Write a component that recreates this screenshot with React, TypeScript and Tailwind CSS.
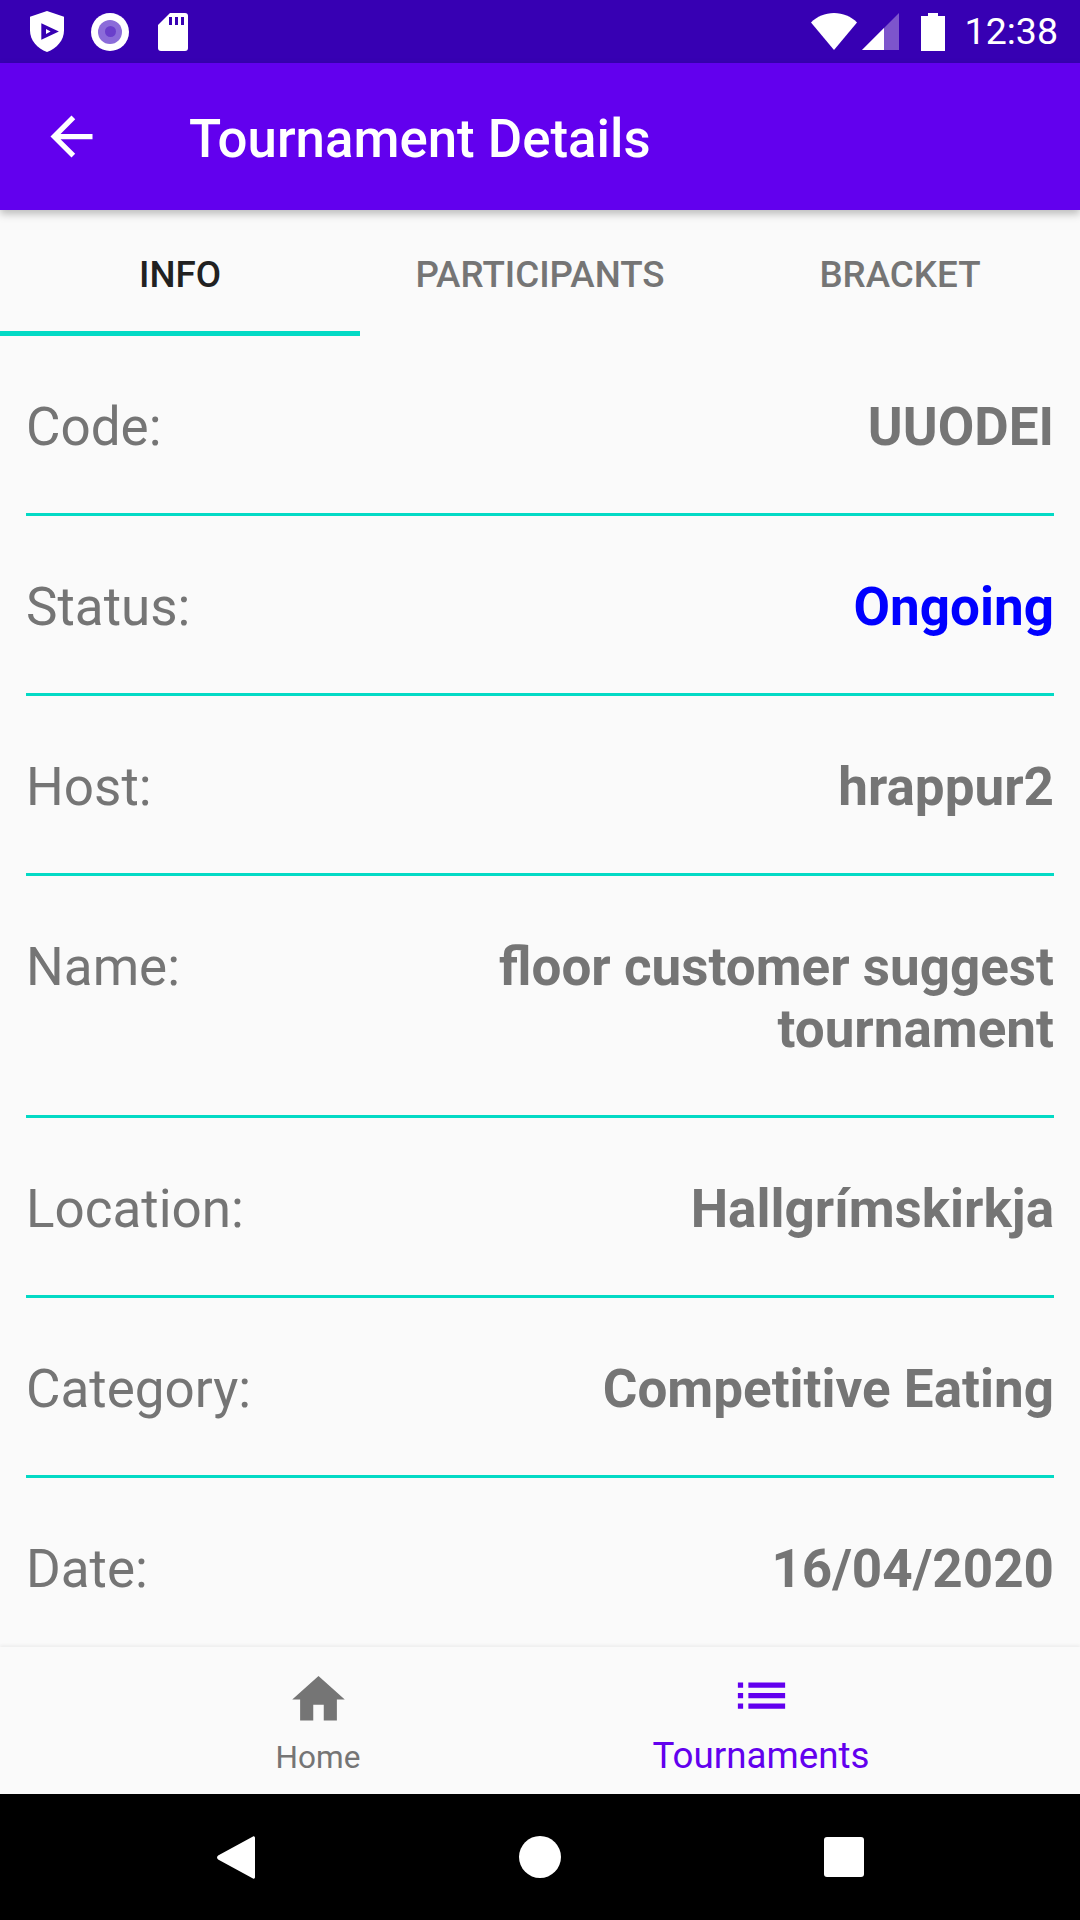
import React from 'react';

const rows = [
  { label: 'Code:', value: 'UUODEI' },
  { label: 'Status:', value: 'Ongoing', valueClass: 'text-[#0000ff]' },
  { label: 'Host:', value: 'hrappur2' },
  { label: 'Name:', value: 'floor customer suggest tournament' },
  { label: 'Location:', value: 'Hallgrímskirkja' },
  { label: 'Category:', value: 'Competitive Eating' },
  { label: 'Date:', value: '16/04/2020' },
];

function StatusBar() {
  return (
    <div className="flex h-[63px] shrink-0 items-center bg-[#3700b3] pl-[30px] pr-[22px] text-white">
      {/* shield */}
      <svg width="34" height="41" viewBox="0 0 33 42" preserveAspectRatio="none">
        <path d="M16.500 0L33 6v14c0 10-7 18.500-16.500 22C7 38.500 0 30 0 20V6z" fill="#fff" />
        <path d="M11 12.500L28 21l-17 8.500z" fill="#3700b3" />
        <path d="M15.500 18.500L20 21l-4.500 2.500z" fill="#fff" />
      </svg>
      {/* record */}
      <div className="ml-[27px] flex h-[38px] w-[38px] items-center justify-center rounded-full bg-white">
        <div className="flex h-[24px] w-[24px] items-center justify-center rounded-full bg-[#8b6cd9]">
          <div className="h-[11px] w-[11px] rounded-full bg-[#6a3fcb]" />
        </div>
      </div>
      {/* sd card */}
      <svg width="30" height="38" viewBox="0 0 30 38" className="ml-[29px]">
        <path d="M12 0h15a3 3 0 0 1 3 3v32a3 3 0 0 1-3 3H3a3 3 0 0 1-3-3V12z" fill="#fff" />
        <path d="M11 4h3v8h-3zM17 4h3v8h-3zM23 4h3v8h-3z" fill="#3700b3" />
      </svg>
      <div className="flex-1" />
      {/* wifi */}
      <svg width="46" height="37" viewBox="0 0 46 37">
        <path d="M23 37L0 9.500C6 3.500 14 0 23 0s17 3.500 23 9.500z" fill="#fff" />
      </svg>
      {/* signal */}
      <svg width="37" height="37" viewBox="0 0 37 37" className="ml-[5px]">
        <path d="M0 37L37 0v37z" fill="#7d55cc" />
        <path d="M0 37l22-22v22z" fill="#fff" />
      </svg>
      {/* battery */}
      <svg width="24" height="38" viewBox="0 0 24 38" className="ml-[22px]">
        <path d="M7 0h10v3h7v35H0V3h7z" fill="#fff" />
      </svg>
      <span className="ml-[20px] font-['Roboto',sans-serif] text-[37.5px] leading-none">12:38</span>
    </div>
  );
}

function AppBar() {
  return (
    <div className="relative z-10 flex h-[147px] shrink-0 items-center bg-[#6200ee] pl-[40px] shadow-[0_4px_8px_rgba(0,0,0,0.25)]">
      <svg width="63" height="63" viewBox="0 0 24 24" fill="#fff">
        <path d="M20 11H7.830l5.590-5.590L12 4l-8 8 8 8 1.410-1.410L7.830 13H20v-2z" />
      </svg>
      <h1 className="ml-[86px] pt-[5px] font-['Roboto',sans-serif] text-[52.8px] font-medium leading-none text-white">
        Tournament Details
      </h1>
    </div>
  );
}

function Tabs() {
  const tabs = ['INFO', 'PARTICIPANTS', 'BRACKET'];
  return (
    <div className="grid h-[126px] shrink-0 grid-cols-3">
      {tabs.map((tab, i) => (
        <div
          key={tab}
          className={`flex items-center justify-center border-b-[5px] pt-[9px] text-[36.75px] font-medium ${
            i === 0 ? 'border-[#03dac5] text-[#212121]' : 'border-transparent text-[#757575]'
          }`}
        >
          {tab}
        </div>
      ))}
    </div>
  );
}

function BottomNav() {
  return (
    <div className="relative z-10 flex h-[147px] shrink-0 justify-center bg-[#fafafa] shadow-[0_-2px_3px_rgba(0,0,0,0.05)]">
      <div className="flex w-[442px] -translate-x-[1px] flex-col items-center text-[#757575]">
        <svg width="63" height="63" viewBox="0 0 24 24" fill="currentColor" className="mt-[21px]">
          <path d="M10 20v-6h4v6h5v-8h3L12 3 2 12h3v8z" />
        </svg>
        <span className="mt-[8px] text-[31.5px] leading-[37px]">Home</span>
      </div>
      <div className="flex w-[442px] flex-col items-center text-[#6200ee]">
        <svg width="63" height="63" viewBox="0 0 24 24" fill="currentColor" className="mt-[17px]">
          <path d="M3 13h2v-2H3v2zm0 4h2v-2H3v2zm0-8h2V7H3v2zm4 4h14v-2H7v2zm0 4h14v-2H7v2zM7 7v2h14V7H7z" />
        </svg>
        <span className="mt-[7px] text-[36.75px] leading-[43px]">Tournaments</span>
      </div>
    </div>
  );
}

function NavBar() {
  return (
    <div className="flex h-[126px] shrink-0 justify-center bg-black">
      <div className="flex w-[304px] items-center justify-center">
        <svg width="38" height="43" viewBox="0 0 38 43">
          <path d="M36 0.500c1.200-.6 2 .2 2 1.500v39c0 1.300-.8 2.100-2 1.500L2 24c-2.600-1.400-2.600-3.600 0-5z" fill="#fff" />
        </svg>
      </div>
      <div className="flex w-[304px] items-center justify-center">
        <div className="h-[42px] w-[42px] rounded-full bg-white" />
      </div>
      <div className="flex w-[304px] items-center justify-center">
        <div className="h-[40px] w-[40px] rounded-[3px] bg-white" />
      </div>
    </div>
  );
}

export default function App() {
  return (
    <div className="flex h-[1920px] w-[1080px] flex-col overflow-hidden bg-[#fafafa] font-['Roboto',sans-serif]">
      <StatusBar />
      <AppBar />
      <Tabs />
      <div className="min-h-0 flex-1 overflow-hidden px-[26px]">
        {rows.map((row) => (
          <div key={row.label} className="flex justify-between border-b-[3px] border-[#03dac5] pb-[55px] pt-[60px] text-[53px] leading-[62px] text-[#757575]">
            <span className="shrink-0">{row.label}</span>
            <span className={`ml-10 max-w-[600px] text-right font-bold ${row.valueClass ?? ''}`}>{row.value}</span>
          </div>
        ))}
      </div>
      <BottomNav />
      <NavBar />
    </div>
  );
}
